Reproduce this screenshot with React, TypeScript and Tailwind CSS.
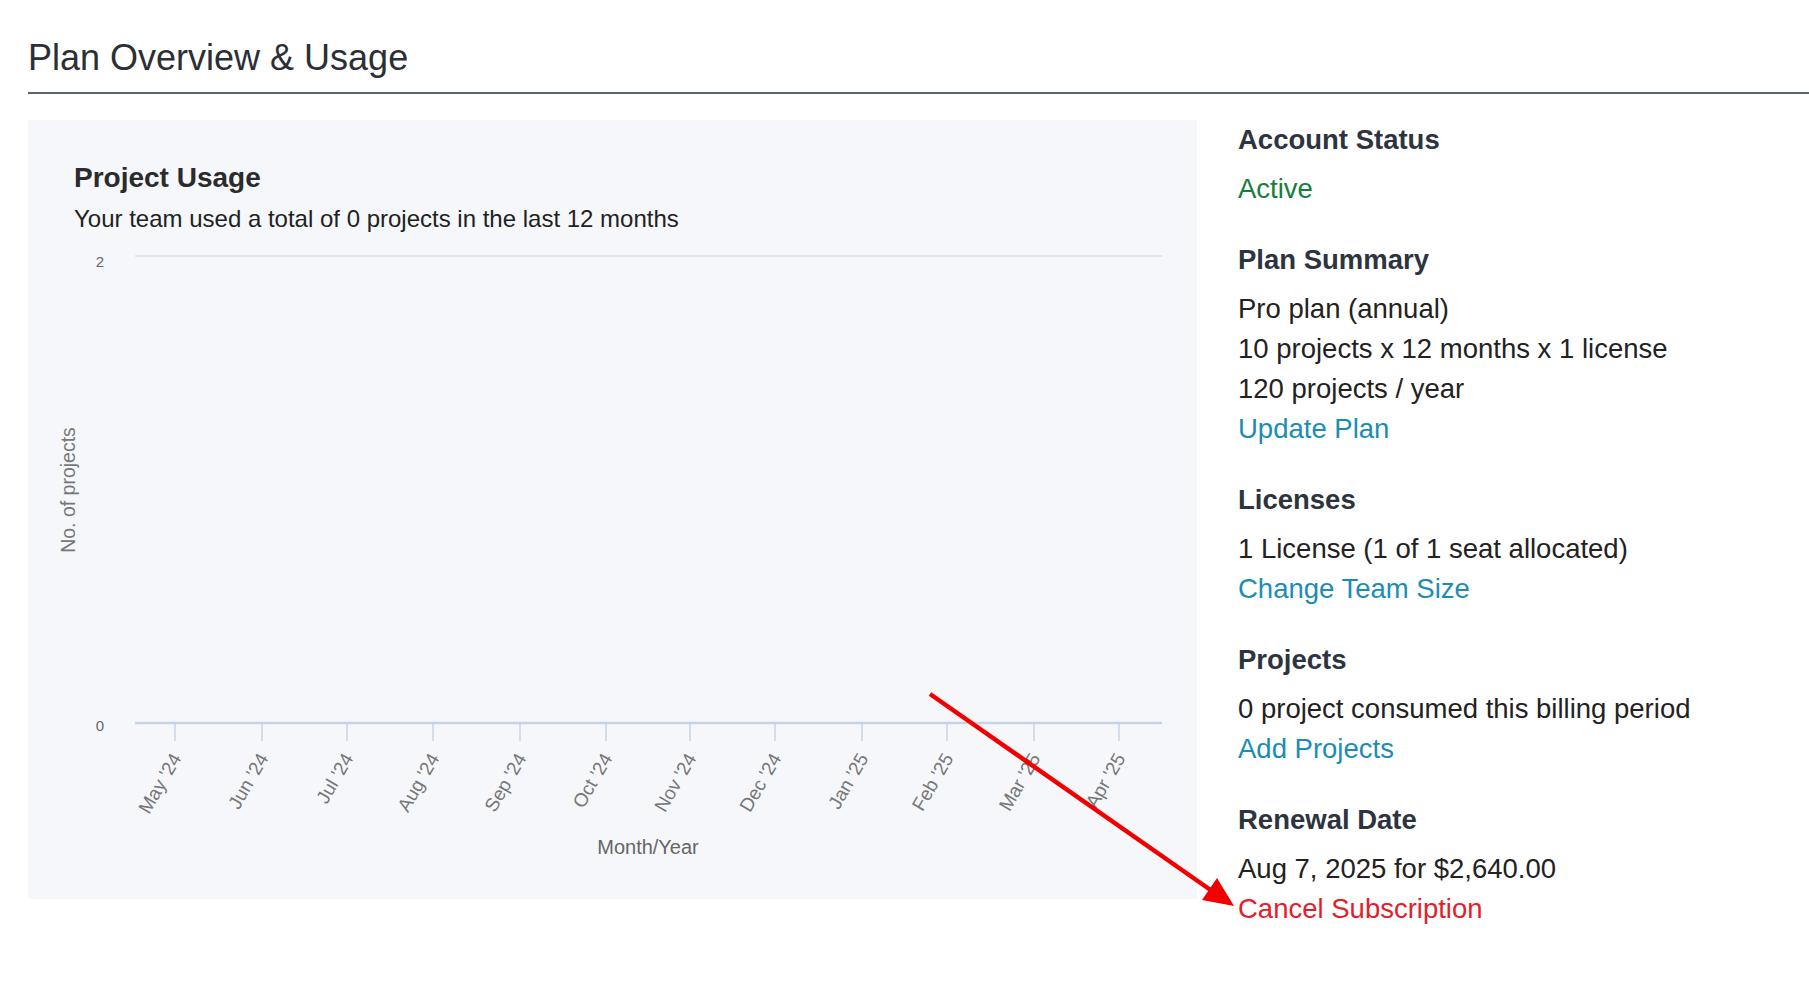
import React from "react";

const months = ["May '24","Jun '24","Jul '24","Aug '24","Sep '24","Oct '24","Nov '24","Dec '24","Jan '25","Feb '25","Mar '25","Apr '25"];
const ticks = [147, 234, 319, 405, 492, 578, 662, 747, 834, 919, 1006, 1091];

function Section({ title, children, first }: { title: string; children: React.ReactNode; first?: boolean }) {
  return (
    <div className={first ? "" : "mt-[31px]"}>
      <div className="text-[27.5px] leading-[40px] font-bold text-[#2d3440]">{title}</div>
      <div className="mt-[9px] text-[27.5px] leading-[40px] text-[#222]">{children}</div>
    </div>
  );
}

export default function App() {
  return (
    <div className="relative min-h-[983px] bg-white pl-[28px] pt-[38px]" style={{ fontFamily: '"Liberation Sans", Arial, sans-serif' }}>
      <div className="text-[36px] leading-[40px] text-[#2b2f36] pb-[14px] border-b-2 border-[#5a6570]">Plan Overview &amp; Usage</div>
      <div className="flex mt-[26px]">
        <div className="w-[1169px] h-[779px] bg-[#f6f7fb] shrink-0">
          <div className="pl-[46px] pt-[40px]">
            <div className="text-[28px] leading-[36px] font-bold text-[#2b2b2b]">Project Usage</div>
            <div className="text-[24px] leading-[32px] text-[#222] mt-[7px]">Your team used a total of 0 projects in the last 12 months</div>
          </div>
          <svg width="1169" height="659" className="block mt-[5px]" style={{ fontFamily: '"Liberation Sans", Arial, sans-serif' }}>
            <line x1="107" y1="16" x2="1134" y2="16" stroke="#e3e5e9" strokeWidth="2" />
            <text x="72" y="27" fontSize="15" fill="#666" textAnchor="middle">2</text>
            <text x="72" y="491" fontSize="15" fill="#666" textAnchor="middle">0</text>
            <line x1="107" y1="483" x2="1134" y2="483" stroke="#c7d3e8" strokeWidth="2.5" />
            {ticks.map((x, i) => (
              <g key={i}>
                <line x1={x} y1="483" x2={x} y2="501" stroke="#c7d3e8" strokeWidth="1.5" />
                <text x={x + 7} y="518" fontSize="19" fill="#777" textAnchor="end" transform={`rotate(-60 ${x + 7} 518)`}>{months[i]}</text>
              </g>
            ))}
            <text x="620" y="614" fontSize="20" fill="#666" textAnchor="middle">Month/Year</text>
            <text x="47" y="250" fontSize="19.5" fill="#777" textAnchor="middle" transform="rotate(-90 47 250)">No. of projects</text>
          </svg>
        </div>
        <div className="ml-[41px]">
          <Section title="Account Status" first>
            <span className="text-[#14803c]">Active</span>
          </Section>
          <Section title="Plan Summary">
            <div>Pro plan (annual)</div>
            <div>10 projects x 12 months x 1 license</div>
            <div>120 projects / year</div>
            <div className="text-[#1b8db5]">Update Plan</div>
          </Section>
          <Section title="Licenses">
            <div>1 License (1 of 1 seat allocated)</div>
            <div className="text-[#1b8db5]">Change Team Size</div>
          </Section>
          <Section title="Projects">
            <div>0 project consumed this billing period</div>
            <div className="text-[#1b8db5]">Add Projects</div>
          </Section>
          <Section title="Renewal Date">
            <div>Aug 7, 2025 for $2,640.00</div>
            <div className="text-[#e3202a]">Cancel Subscription</div>
          </Section>
        </div>
      </div>
      <svg className="absolute left-0 top-0 pointer-events-none" width="1809" height="983">
        <line x1="930" y1="694" x2="1212" y2="891" stroke="#f20000" strokeWidth="4.5" />
        <polygon points="1234,906 1202,900 1217,878" fill="#f20000" />
      </svg>
    </div>
  );
}
